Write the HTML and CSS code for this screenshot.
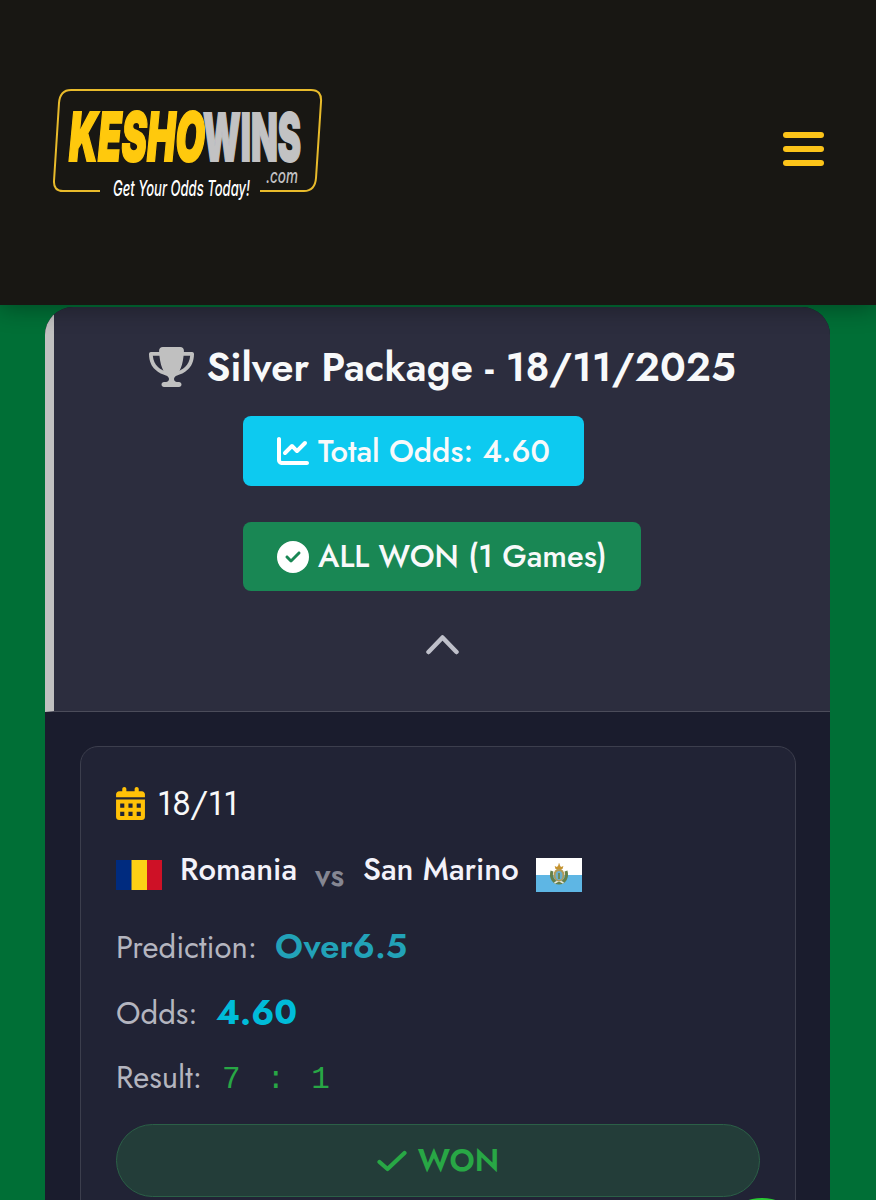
FILE: index.html
```html
<!DOCTYPE html>
<html lang="en">
<head>
  <meta charset="UTF-8" />
  <meta name="viewport" content="width=device-width, initial-scale=1.0" />
  <title>KeshoWins | Silver Package</title>
  <link rel="stylesheet" href="styles.css">
</head>
<body>
  <header class="navbar">
    <a href="#" class="logo">
      <svg width="272" height="116" viewBox="0 0 272 116" role="img" aria-label="KeshoWins.com">
        <path class="logo-frame" d="M48 105H11Q1.500 105 2 95L7 17Q8 4 19 4H259Q270 4 269 16L264 92Q263 105 252 105H208"/>
        <text class="logo-wins" x="151" y="75" textLength="98" lengthAdjust="spacingAndGlyphs">WINS</text>
        <text class="logo-kesho" x="17" y="75" textLength="136" lengthAdjust="spacingAndGlyphs">KESHO</text>
        <text class="logo-com" x="214" y="97" textLength="32" lengthAdjust="spacingAndGlyphs">.com</text>
        <text class="logo-tag" x="61" y="110" textLength="137" lengthAdjust="spacingAndGlyphs">Get Your Odds Today!</text>
      </svg>
    </a>
    <button class="menu-btn" aria-label="Menu"><span></span><span></span><span></span></button>
  </header>

  <main class="package">
    <section class="package-header">
      <h1>
        <svg class="trophy" viewBox="0 0 576 512"><path d="M400 0H176c-26.500 0-48.100 21.800-47.100 48.200c.2 5.300 .4 10.600 .7 15.800H24C10.700 64 0 74.700 0 88c0 92.600 33.500 157 78.500 200.700c44.300 43.100 98.300 64.800 138.100 75.800c23.400 6.500 39.400 26 39.400 45.600c0 20.900-17 37.900-37.900 37.900H192c-17.700 0-32 14.300-32 32s14.300 32 32 32H384c17.700 0 32-14.300 32-32s-14.300-32-32-32H357.900C337 448 320 431 320 410.100c0-19.600 15.900-39.200 39.400-45.600c39.900-11 93.900-32.700 138.200-75.800C542.500 245 576 180.600 576 88c0-13.300-10.700-24-24-24H446.400c.3-5.200 .5-10.400 .7-15.800C448.100 21.800 426.500 0 400 0zM48.900 112h84.400c9.100 90.100 29.200 150.300 51.900 190.600c-24.900-11-50.800-26.500-73.200-48.300c-32-31.100-58-76-63-142.300zM464.100 254.300c-22.400 21.800-48.300 37.300-73.200 48.300c22.700-40.300 42.800-100.500 51.900-190.600h84.400c-5.100 66.300-31.100 111.200-63 142.300z"/></svg>
        <span class="title">Silver Package - 18/11/2025</span>
      </h1>
      <div class="badges">
        <span class="badge badge-info">
          <svg viewBox="0 0 512 512"><path d="M64 64c0-17.700-14.300-32-32-32S0 46.300 0 64V400c0 44.200 35.800 80 80 80H480c17.700 0 32-14.300 32-32s-14.300-32-32-32H80c-8.800 0-16-7.200-16-16V64zm406.600 86.600c12.500-12.500 12.500-32.800 0-45.300s-32.800-12.500-45.300 0L320 210.700l-57.400-57.400c-12.500-12.500-32.800-12.500-45.300 0l-112 112c-12.500 12.500-12.500 32.800 0 45.300s32.800 12.500 45.300 0L240 221.300l57.400 57.400c12.500 12.500 32.800 12.500 45.300 0l128-128z"/></svg>
          <span class="total">Total Odds: 4.60</span>
        </span>
        <span class="badge badge-success">
          <svg viewBox="0 0 512 512"><path d="M256 512A256 256 0 1 0 256 0a256 256 0 1 0 0 512zM369 209L241 337c-9.400 9.400-24.600 9.400-33.900 0l-64-64c-9.400-9.400-9.400-24.600 0-33.900s24.600-9.400 33.900 0l47 47L335 175c9.400-9.400 24.600-9.400 33.900 0s9.400 24.600 0 33.900z"/></svg>
          <span class="status">ALL WON (1 Games)</span>
        </span>
      </div>
      <svg class="chevron" viewBox="0 0 33 21"><path d="M2.500 18L16.500 3.500L30.500 18"/></svg>
    </section>

    <section class="package-body">
      <article class="match">
        <div class="match-date">
          <svg viewBox="0 0 448 512"><path fill-rule="evenodd" d="M128 0c18 0 32 14 32 32v32h128V32c0-18 14-32 32-32s32 14 32 32v32h48c26 0 48 22 48 48v48H0v-48c0-26 22-48 48-48h48V32c0-18 14-32 32-32zM0 192h448v272c0 26-22 48-48 48H48c-26 0-48-22-48-48zM64 256v64h64v-64zm128 0v64h64v-64zm128 0v64h64v-64zM64 384v64h64v-64zm128 0v64h64v-64zm128 0v64h64v-64z"/></svg>
          <span>18/11</span>
        </div>
        <div class="teams">
          <svg class="flag flag-ro" viewBox="0 0 46 30"><path fill="#002b7f" d="M0 0h16v30H0z"/><path fill="#fcd116" d="M15.500 0h15.500v30H15.500z"/><path fill="#ce1126" d="M31 0h15v30H31z"/></svg>
          <span class="team home">Romania</span>
          <span class="vs">vs</span>
          <span class="team away">San Marino</span>
          <svg class="flag flag-sm" viewBox="0 0 46 34">
            <path fill="#fff" d="M0 0h46v17H0z"/><path fill="#5eb6e4" d="M0 17h46v17H0z"/>
            <path d="M16 13C14 20 18 25 23 25S32 20 30 13" fill="none" stroke="#65804a" stroke-width="3"/>
            <path d="M18.500 25L23 22.500L27.500 25" fill="none" stroke="#e4e8e0" stroke-width="1.500"/>
            <ellipse cx="23" cy="17" rx="5.500" ry="6.500" fill="#b39a55"/>
            <ellipse cx="23" cy="17.500" rx="3.500" ry="4.500" fill="#6baeca"/>
            <path d="M22 15h2v6h-2z" fill="#708b56"/>
            <path d="M19.500 11L18.700 8L21 9L22.500 7V5.500H23.700V7L25 9L27.400 8L26.500 11z" fill="#c5932f"/>
          </svg>
        </div>
        <div class="row"><span class="label label-prediction">Prediction:</span><strong class="prediction">Over6.5</strong></div>
        <div class="row"><span class="label label-odds">Odds:</span><strong class="odds">4.60</strong></div>
        <div class="row"><span class="label label-result">Result:</span><span class="score">7 : 1</span></div>
        <div class="outcome">
          <svg viewBox="0 0 30 22"><path d="M2.500 12L10.500 19L27.500 3"/></svg>
          <span>WON</span>
        </div>
      </article>
    </section>
  </main>
  <a class="chat-btn" href="#" aria-label="Chat"></a>
</body>
</html>
```
FILE: styles.css
```css
:root{
  --gold:#fcc419;
  --silver:#c0c0c0;
  --green:#28a745;
  --text:#f8f9fa;
  --muted:#b4b5bf;
}
*{box-sizing:border-box}
body{margin:0;height:1200px;overflow:hidden;font-family:Jost,Lato,sans-serif;color:var(--text);background:#006f36}
svg{display:block;flex:none}
span,strong{white-space:nowrap}

.navbar{position:relative;z-index:2;height:305px;padding:0 52px 7px;display:flex;align-items:center;justify-content:space-between;background:#181713;box-shadow:0 4px 22px rgba(0,0,0,.32)}
.logo{display:block;margin-top:-10px}
.logo svg{overflow:visible}
.logo-frame{fill:none;stroke:#e8bb2b;stroke-width:2;stroke-linecap:butt}
.logo text{font-family:Inter,sans-serif}
.logo .logo-kesho{font-size:67px;font-weight:900;font-style:italic;fill:#ffc90d;stroke:#ffc90d;stroke-width:2}
.logo .logo-wins{font-size:66px;font-weight:900;fill:#c2c2c3;stroke:#c2c2c3;stroke-width:2}
.logo .logo-com{font-size:20px;font-weight:500;font-style:italic;fill:#c2c2c3}
.logo .logo-tag{font-size:21px;font-weight:500;font-style:italic;fill:#fff}
.menu-btn{display:flex;flex-direction:column;gap:8px;padding:0;border:0;background:none;cursor:pointer}
.menu-btn span{width:41px;height:6px;border-radius:3px;background:var(--gold)}

.package{width:785px;height:893px;margin:2px 0 0 45px;border-radius:28px 28px 0 0;overflow:hidden;background:#1a1c2d}
.package-header{height:405px;padding:34px 0 0;border-left:9px solid var(--silver);border-bottom:1px solid #4b4c5a;background:#2c2d3e;display:flex;flex-direction:column;align-items:center}
h1{margin:0;height:52px;display:flex;align-items:center;gap:13px;font-size:40px;font-weight:600}
.trophy{width:45px;height:40px;margin-top:-1px;fill:var(--silver)}
.title{width:529px;letter-spacing:.04px}
.badges{width:398px;margin-top:23px;display:flex;flex-direction:column;align-items:flex-start;gap:36px}
.badge{height:70px;padding:0 34px;display:flex;align-items:center;gap:9px;border-radius:8px;font-size:31px;font-weight:500}
.badge svg{width:32px;height:32px;fill:#fff}
.badge-info{width:341px;background:#0dcaf0}
.badge-success{width:398px;height:69px;background:#198754}
.chevron{width:33px;height:21px;margin-top:43px}
.chevron path{fill:none;stroke:#bfc0ca;stroke-width:4.500;stroke-linecap:round;stroke-linejoin:round}

.package-body{padding:34px 34px 34px 35px}
.match{height:520px;padding:34px 35px;border:1px solid #3c3e4d;border-radius:18px;background:#212335}
.match-date{height:44px;display:flex;align-items:center;gap:12px;font-size:34px}
.match-date svg{width:29px;height:33px;fill:#ffc107}
.teams{height:46px;margin-top:25px;display:flex;align-items:center;font-size:31px;font-weight:500}
.flag-ro{width:46px;height:30px;margin:4px 18px 0 0}
.flag-sm{width:46px;height:34px;margin-top:4px}
.team{margin-top:-8px;color:#f3f2fa}
.home{width:117px;margin-right:18px}
.away{width:155px;margin-right:18px}
.vs{width:30px;margin:5px 18px 0 0;font-size:31px;font-weight:600;color:#858692}
.row{height:46px;margin-top:20px;display:flex;align-items:baseline;font-size:31px;line-height:46px}
.teams + .row{margin-top:27px}
.label{color:var(--muted)}
.label-prediction{width:140px;margin-right:19px}
.label-odds{width:81px;margin-right:19px}
.label-result{width:85px;margin-right:20px}
.prediction{font-size:34.5px;font-weight:600;color:#22a2b8}
.odds{font-size:34.5px;color:#00bcd9}
.score{padding-left:1px;font-family:"Liberation Mono",monospace;letter-spacing:3.700px;color:var(--green)}
.outcome{height:73px;margin-top:23px;display:flex;align-items:center;justify-content:center;gap:11px;border:1px solid #2b6047;border-radius:37px;background:#233d39;color:var(--green);font-size:31px;font-weight:600}
.outcome svg{width:30px;height:22px}
.outcome path{fill:none;stroke:var(--green);stroke-width:4.200;stroke-linecap:round;stroke-linejoin:round}

.chat-btn{position:fixed;z-index:3;left:712px;top:1198px;width:100px;height:100px;border-radius:50%;background:#2bc934}
```
